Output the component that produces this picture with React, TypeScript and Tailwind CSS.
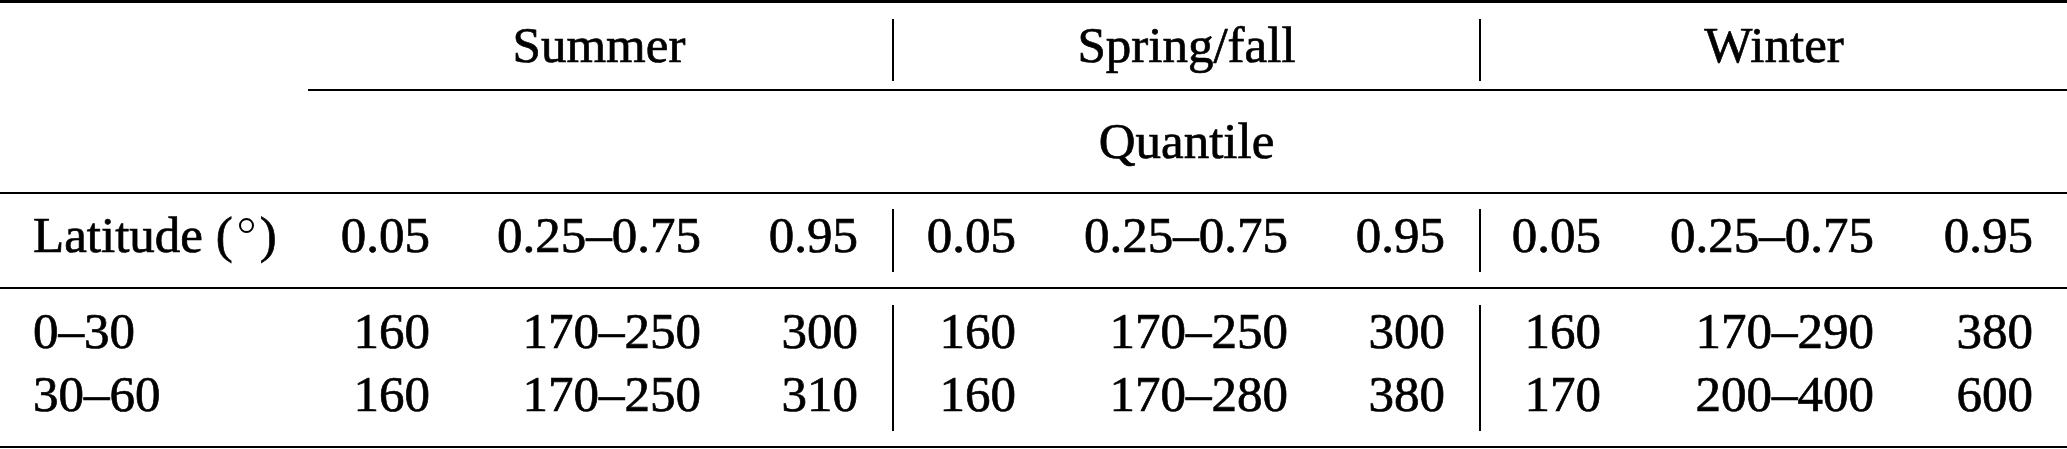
const cols =
  'grid grid-cols-[306px_158px_271px_159px_156px_272px_159px_154px_273px_159px]';

const quantiles = ['0.05', '0.25–0.75', '0.95'];

const rows = [
  { lat: '0–30', vals: ['160', '170–250', '300', '160', '170–250', '300', '160', '170–290', '380'] },
  { lat: '30–60', vals: ['160', '170–250', '310', '160', '170–280', '380', '170', '200–400', '600'] },
];

function Num({ children, sep }: { children: React.ReactNode; sep?: boolean }) {
  return (
    <div
      className={`h-full pr-[34px] text-right leading-[53px] ${sep ? 'border-r-2 border-black' : ''}`}
    >
      {children}
    </div>
  );
}

export default function App() {
  return (
    <div className="w-[2067px] h-[449px] bg-white text-black font-['Times_New_Roman','Liberation_Serif',serif] text-[51px] [-webkit-text-stroke:0.7px_black] overflow-hidden">
      {/* top rule */}
      <div className="h-[3px] bg-black" />

      {/* seasons */}
      <div className={`${cols} h-[62px] mt-[16px]`}>
        <div />
        <div className="col-span-3 h-full border-r-2 border-black text-center leading-[53px]">Summer</div>
        <div className="col-span-3 h-full border-r-2 border-black text-center leading-[53px]">Spring/fall</div>
        <div className="col-span-3 h-full text-center leading-[53px]">Winter</div>
      </div>

      {/* cmidrule */}
      <div className={`${cols} mt-[8px]`}>
        <div className="col-start-2 col-span-9 ml-[2px] h-[2px] bg-black" />
      </div>

      {/* quantile */}
      <div className={`${cols} h-[62px] mt-[24px]`}>
        <div className="col-start-2 col-span-9 text-center leading-[53px]">Quantile</div>
      </div>

      {/* midrule */}
      <div className="h-[2px] bg-black mt-[15px]" />

      {/* column heads */}
      <div className={`${cols} h-[63px] mt-[15px]`}>
        <div className="pl-[33px] leading-[53px] whitespace-nowrap">
          Latitude (<span className="inline-block align-top mt-[9px] mx-[6px] w-[15px] h-[15px] rounded-full border-2 border-black" />)
        </div>
        {[0, 1, 2].map((g) =>
          quantiles.map((q, i) => (
            <Num key={`${g}-${i}`} sep={i === 2 && g < 2}>
              {q}
            </Num>
          ))
        )}
      </div>

      {/* midrule */}
      <div className="h-[2px] bg-black mt-[15px]" />

      {/* data */}
      <div className="mt-[16px]">
        {rows.map((r) => (
          <div key={r.lat} className={`${cols} h-[63px]`}>
            <div className="pl-[33px] leading-[53px]">{r.lat}</div>
            {r.vals.map((v, i) => (
              <Num key={i} sep={i === 2 || i === 5}>
                {v}
              </Num>
            ))}
          </div>
        ))}
      </div>

      {/* bottom rule */}
      <div className="h-[2px] bg-black mt-[15px]" />
    </div>
  );
}
